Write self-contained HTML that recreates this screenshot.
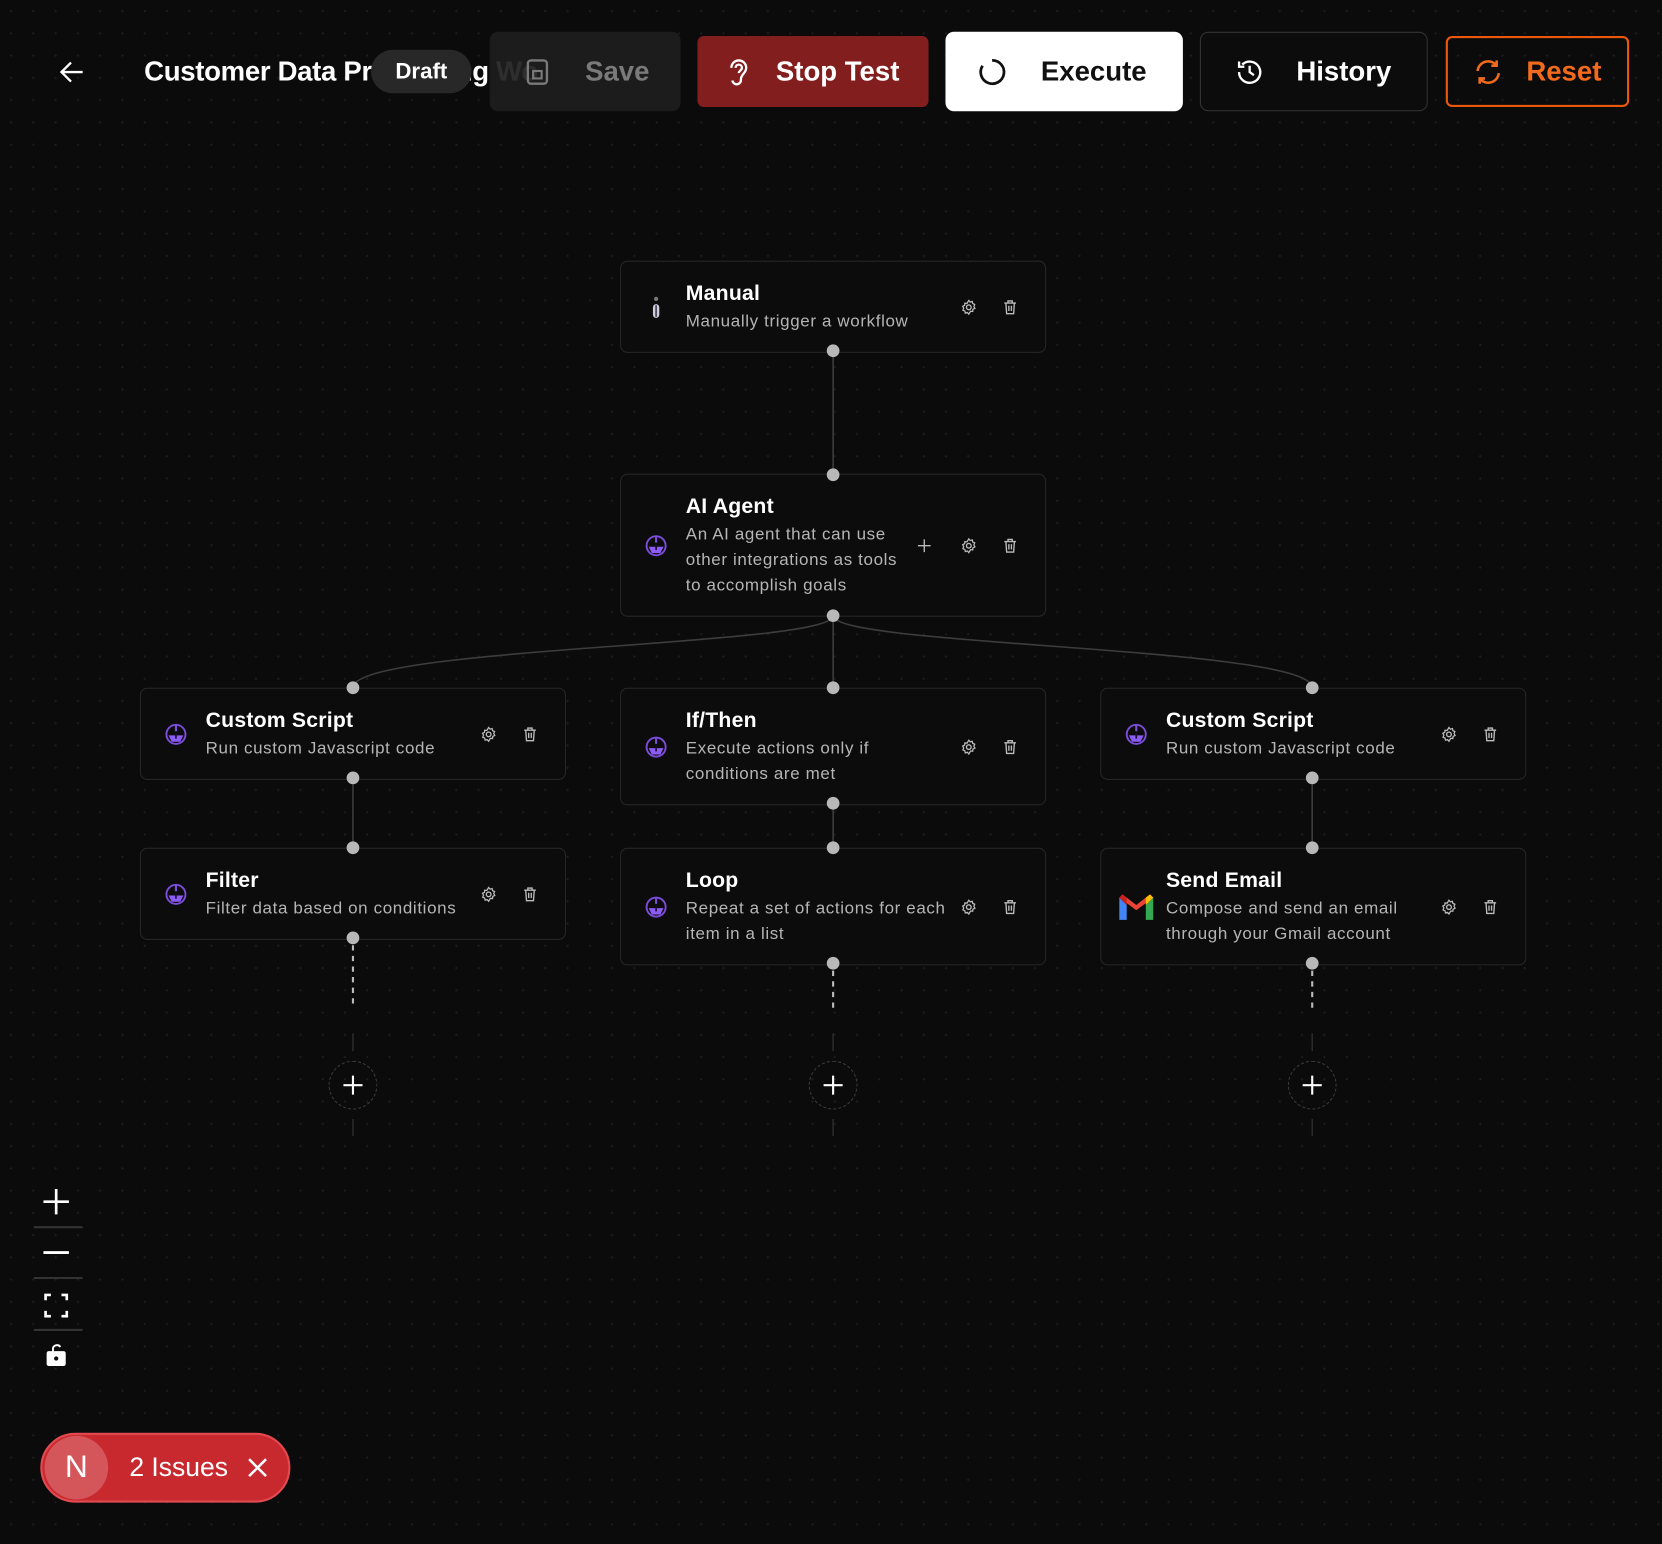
<!DOCTYPE html>
<html><head><meta charset="utf-8"><style>
*{box-sizing:border-box;margin:0;padding:0}
html,body{width:1662px;height:1544px;overflow:hidden;background:#0b0b0b}
#w{position:absolute;left:0;top:0;width:1568px;height:1457px;transform:scale(1.05995,1.0597);transform-origin:0 0;font-family:"Liberation Sans",sans-serif;color:#fff;
background-color:#0b0b0b;background-image:radial-gradient(circle,#1e1e1e 0.8px,transparent 1.2px);background-size:21px 21px}
.a{position:absolute}
.btn{position:absolute;display:flex;align-items:center;font-size:26px;font-weight:bold;border-radius:8px}
.node{position:absolute;width:402px;border:1px solid #262626;border-radius:7px;background:#0c0c0c;padding:17px 0 16px 61px}
.node .t{font-size:20px;font-weight:bold;line-height:26px;letter-spacing:.2px}
.node .d{font-size:16px;color:#b5b5b5;line-height:24px;margin-top:2px;width:250px;letter-spacing:.6px}
.node .ic{position:absolute;left:22px;top:50%;margin-top:-11px;width:22px;height:22px}
.node .g{position:absolute;right:64px;top:50%;margin-top:-8px}
.node .tr{position:absolute;right:25px;top:50%;margin-top:-8px}
.node .pl{position:absolute;right:106px;top:50%;margin-top:-8px}
.h{position:absolute;width:12px;height:12px;border-radius:50%;background:#b8b8b8;margin:-6px 0 0 -6px}
.add{position:absolute;width:46px;height:46px;border:1.5px dashed #3a3a3a;border-radius:50%;margin:-23px 0 0 -23px;display:flex;align-items:center;justify-content:center}
</style></head><body><div id="w">
<svg class="a" style="left:0;top:0" width="1568" height="1457">
<g stroke="#3d3d3d" stroke-width="1.5" fill="none">
<line x1="786" y1="331" x2="786" y2="447"/>
<path d="M786 581 C786 610 333 610 333 649"/>
<path d="M786 581 C786 610 1238 610 1238 649"/>
<line x1="786" y1="581" x2="786" y2="649"/>
<line x1="333" y1="734" x2="333" y2="800"/>
<line x1="786" y1="758" x2="786" y2="800"/>
<line x1="1238" y1="734" x2="1238" y2="800"/>
<g stroke="#2a2a2a"><line x1="333" y1="975" x2="333" y2="992"/><line x1="786" y1="975" x2="786" y2="992"/><line x1="1238" y1="975" x2="1238" y2="992"/>
<line x1="333" y1="1056" x2="333" y2="1072"/><line x1="786" y1="1056" x2="786" y2="1072"/><line x1="1238" y1="1056" x2="1238" y2="1072"/></g>
</g>
<g stroke="#bbb" stroke-width="2" stroke-dasharray="5 5"><line x1="333" y1="892" x2="333" y2="952"/><line x1="786" y1="916" x2="786" y2="952"/><line x1="1238" y1="916" x2="1238" y2="952"/></g>
</svg>

<!-- header -->
<svg class="a" style="left:55px;top:56px" width="26" height="24" viewBox="0 0 26 24"><path d="M23 12H3M12 3L3 12l9 9" stroke="#fff" stroke-width="2.2" fill="none"/></svg>
<div class="a" style="left:136px;top:52px;font-size:26px;font-weight:bold;white-space:nowrap;letter-spacing:-.3px">Customer Data Processing Wo</div>
<div class="a" style="left:350px;top:47px;width:95px;height:41px;border-radius:21px;background:#282828;font-size:21px;font-weight:bold;display:flex;align-items:center;justify-content:center">Draft</div>
<div class="btn" style="left:462px;top:30px;width:180px;height:75px;background:rgba(30,30,30,.93);color:#7a7a7a"><svg style="margin-left:32px" width="26" height="28" viewBox="0 0 26 28"><rect x="4" y="3" width="18" height="22" rx="3" stroke="#7a7a7a" stroke-width="2.2" fill="none"/><rect x="9" y="13" width="8" height="7" stroke="#7a7a7a" stroke-width="2" fill="none"/></svg><span style="margin-left:32px">Save</span></div>
<div class="btn" style="left:658px;top:34px;width:218px;height:67px;background:#821e1e;border-radius:6px"><svg style="margin-left:26px" width="24" height="30" viewBox="0 0 24 30"><path d="M6 11a7 7 0 1 1 14 0c0 5-5 6-5 11a4 4 0 0 1-8 1M10 11a3 3 0 1 1 6 0c0 2-3 3-3 5" stroke="#fff" stroke-width="2.2" fill="none"/></svg><span style="margin-left:24px">Stop Test</span></div>
<div class="btn" style="left:892px;top:30px;width:224px;height:75px;background:#fff;color:#111"><svg style="margin-left:30px" width="28" height="28" viewBox="0 0 28 28"><path d="M14 3a11 11 0 1 1-9 5" stroke="#111" stroke-width="2.6" fill="none"/></svg><span style="margin-left:32px">Execute</span></div>
<div class="btn" style="left:1132px;top:30px;width:215px;height:75px;border:1.5px solid #333;background:#0c0c0c"><svg style="margin-left:32px" width="28" height="28" viewBox="0 0 28 28"><path d="M4 14a10 10 0 1 0 3-7M4 4v5h5M14 8v6l4 3" stroke="#fff" stroke-width="2.2" fill="none"/></svg><span style="margin-left:30px">History</span></div>
<div class="btn" style="left:1364px;top:34px;width:173px;height:67px;border:2px solid #ea580c;color:#f26a1b;border-radius:6px"><svg style="margin-left:24px" width="28" height="28" viewBox="0 0 28 28"><path d="M4 13a10 10 0 0 1 18-5M24 15a10 10 0 0 1-18 5M22 3v5h-5M6 25v-5h5" stroke="#f26a1b" stroke-width="2.4" fill="none"/></svg><span style="margin-left:22px">Reset</span></div>

<!-- icons defs -->
<svg width="0" height="0" style="position:absolute"><defs>
<g id="gear"><circle cx="8" cy="8" r="2.2" fill="none" stroke="#bbb" stroke-width="1.3"/><path d="M8 1.5l1.3 1.6 2-.6.4 2 1.9.8-.8 1.9 1 1.8-1.9.9-.2 2-2-.2L8 14.5l-1.3-1.6-2 .6-.4-2-1.9-.8.8-1.9-1-1.8 1.9-.9.2-2 2 .2z" fill="none" stroke="#bbb" stroke-width="1.2"/></g>
<g id="trash"><path d="M2.5 4h11M6 4V2h4v2M4 4l.7 10h6.6L12 4M6.8 6.5v5M9.2 6.5v5" fill="none" stroke="#bbb" stroke-width="1.3"/></g>
<g id="bot"><circle cx="11" cy="11" r="9" fill="none" stroke="#7c4ddb" stroke-width="1.8"/><path d="M11 2v6" stroke="#7c4ddb" stroke-width="2"/><path d="M4 12h14l-3 6H7z" fill="#8b5cf6"/><path d="M11 10v5" stroke="#1a1030" stroke-width="1.6"/></g>
</defs></svg>

<!-- nodes -->
<div class="node" style="left:585px;top:246px"><svg class="ic" viewBox="0 0 22 22"><circle cx="11" cy="3" r="2" fill="#777"/><rect x="8" y="8" width="6" height="13" rx="3" fill="#ccd"/><rect x="10.2" y="9" width="1.6" height="11" fill="#445"/></svg><div class="t">Manual</div><div class="d" style="width:300px">Manually trigger a workflow</div><svg class="g" width="16" height="16"><use href="#gear"/></svg><svg class="tr" width="16" height="16"><use href="#trash"/></svg></div>

<div class="node" style="left:585px;top:447px"><svg class="ic" viewBox="0 0 22 22"><use href="#bot"/></svg><div class="t">AI Agent</div><div class="d" style="width:215px">An AI agent that can use other integrations as tools to accomplish goals</div><svg class="pl" width="16" height="16"><path d="M8 2v12M2 8h12" stroke="#bbb" stroke-width="1.3"/></svg><svg class="g" width="16" height="16"><use href="#gear"/></svg><svg class="tr" width="16" height="16"><use href="#trash"/></svg></div>

<div class="node" style="left:132px;top:649px"><svg class="ic" viewBox="0 0 22 22"><use href="#bot"/></svg><div class="t">Custom Script</div><div class="d" style="width:300px">Run custom Javascript code</div><svg class="g" width="16" height="16"><use href="#gear"/></svg><svg class="tr" width="16" height="16"><use href="#trash"/></svg></div>

<div class="node" style="left:585px;top:649px"><svg class="ic" viewBox="0 0 22 22"><use href="#bot"/></svg><div class="t">If/Then</div><div class="d" style="width:200px">Execute actions only if conditions are met</div><svg class="g" width="16" height="16"><use href="#gear"/></svg><svg class="tr" width="16" height="16"><use href="#trash"/></svg></div>

<div class="node" style="left:1038px;top:649px"><svg class="ic" viewBox="0 0 22 22"><use href="#bot"/></svg><div class="t">Custom Script</div><div class="d" style="width:300px">Run custom Javascript code</div><svg class="g" width="16" height="16"><use href="#gear"/></svg><svg class="tr" width="16" height="16"><use href="#trash"/></svg></div>

<div class="node" style="left:132px;top:800px"><svg class="ic" viewBox="0 0 22 22"><use href="#bot"/></svg><div class="t">Filter</div><div class="d" style="width:300px">Filter data based on conditions</div><svg class="g" width="16" height="16"><use href="#gear"/></svg><svg class="tr" width="16" height="16"><use href="#trash"/></svg></div>

<div class="node" style="left:585px;top:800px"><svg class="ic" viewBox="0 0 22 22"><use href="#bot"/></svg><div class="t">Loop</div><div class="d" style="width:265px">Repeat a set of actions for each item in a list</div><svg class="g" width="16" height="16"><use href="#gear"/></svg><svg class="tr" width="16" height="16"><use href="#trash"/></svg></div>

<div class="node" style="left:1038px;top:800px"><svg class="ic" style="left:16px;width:34px;height:26px;margin-top:-13px" viewBox="0 0 34 26"><path d="M1 4v21h7V11z" fill="#4285f4"/><path d="M26 11v14h7V4z" fill="#34a853"/><path d="M1 4l16 12L33 4l-3-3-13 10L4 1z" fill="#ea4335"/><path d="M26 4v7l7-7-3-3z" fill="#fbbc04"/><path d="M1 4l7 7V4L4 1z" fill="#c5221f"/></svg><div class="t">Send Email</div><div class="d" style="width:240px">Compose and send an email through your Gmail account</div><svg class="g" width="16" height="16"><use href="#gear"/></svg><svg class="tr" width="16" height="16"><use href="#trash"/></svg></div>

<!-- handles -->
<div class="h" style="left:786px;top:331px"></div><div class="h" style="left:786px;top:448px"></div><div class="h" style="left:786px;top:581px"></div>
<div class="h" style="left:333px;top:649px"></div><div class="h" style="left:786px;top:649px"></div><div class="h" style="left:1238px;top:649px"></div>
<div class="h" style="left:333px;top:734px"></div><div class="h" style="left:786px;top:758px"></div><div class="h" style="left:1238px;top:734px"></div>
<div class="h" style="left:333px;top:800px"></div><div class="h" style="left:786px;top:800px"></div><div class="h" style="left:1238px;top:800px"></div>
<div class="h" style="left:333px;top:885px"></div><div class="h" style="left:786px;top:909px"></div><div class="h" style="left:1238px;top:909px"></div>

<div class="add" style="left:333px;top:1024px"><svg width="20" height="20"><path d="M10 1v18M1 10h18" stroke="#fff" stroke-width="2"/></svg></div>
<div class="add" style="left:786px;top:1024px"><svg width="20" height="20"><path d="M10 1v18M1 10h18" stroke="#fff" stroke-width="2"/></svg></div>
<div class="add" style="left:1238px;top:1024px"><svg width="20" height="20"><path d="M10 1v18M1 10h18" stroke="#fff" stroke-width="2"/></svg></div>

<!-- controls -->
<svg class="a" style="left:28px;top:1110px" width="50" height="190">
<path d="M25 12v24M13 24h24" stroke="#fff" stroke-width="2.5"/>
<path d="M4 48h46M4 96h46M4 145h46" stroke="#333" stroke-width="2"/>
<path d="M13 72h24" stroke="#fff" stroke-width="2.8"/>
<path d="M15 117v-5h5M30 112h5v5M35 127v5h-5M20 132h-5v-5" stroke="#fff" stroke-width="2.5" fill="none"/>
<path d="M22 166v-4a4 4 0 0 1 7 -1" stroke="#fff" stroke-width="1.8" fill="none"/><rect x="16" y="165" width="18" height="14" rx="2" fill="#fff"/><circle cx="25" cy="172" r="2" fill="#0b0b0b"/>
</svg>

<div class="a" style="left:38px;top:1352px;width:236px;height:66px;border-radius:33px;background:#c8292f;border:2px solid #e24a50;display:flex;align-items:center">
<div style="width:60px;height:60px;border-radius:50%;background:#d4565b;margin-left:2px;display:flex;align-items:center;justify-content:center;font-size:30px">N</div>
<span style="margin-left:20px;font-size:25px">2 Issues</span>
<svg style="margin-left:18px" width="20" height="20"><path d="M2 2l16 16M18 2L2 18" stroke="#fff" stroke-width="2.4"/></svg>
</div>
</div></body></html>
